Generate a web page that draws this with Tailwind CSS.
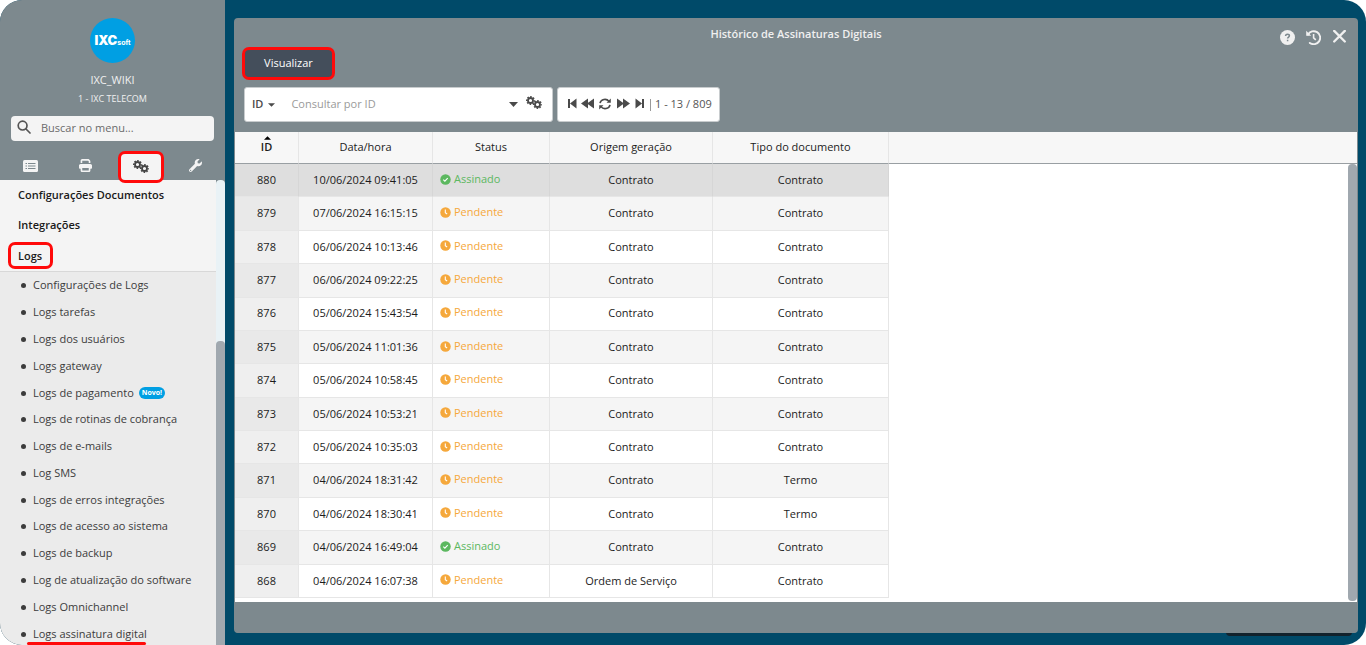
<!DOCTYPE html>
<html lang="pt-BR">
<head>
    <meta charset="UTF-8">
    <meta name="viewport" content="width=device-width, initial-scale=1.0">
    <title>Histórico de Assinaturas Digitais</title>
    <script src="https://cdn.jsdelivr.net/npm/@tailwindcss/browser@4"></script>
</head>
<body class="bg-white font-['Open_Sans',sans-serif] text-[11px]">
    <!-- shared icons -->
    <svg class="hidden">
        <symbol id="gear" viewBox="0 0 20 20">
            <circle cx="10" cy="10" r="5.6" fill="none" stroke="currentColor" stroke-width="4"/>
            <circle cx="10" cy="10" r="8.4" fill="none" stroke="currentColor" stroke-width="3.200" stroke-dasharray="3.6 3" stroke-dashoffset="1.8"/>
        </symbol>
        <symbol id="gears" viewBox="0 0 16 14">
            <use href="#gear" x="0" y="0" width="9" height="9"/>
            <use href="#gear" x="7" y="4" width="9" height="9"/>
        </symbol>
        <symbol id="clock" viewBox="0 0 12 12">
            <circle cx="6" cy="6" r="5.7" fill="currentColor"/>
            <path d="M5.8 2.8V6.2L7.8 7.6" fill="none" stroke="#fff" stroke-width="1.2"/>
        </symbol>
        <symbol id="check" viewBox="0 0 12 12">
            <circle cx="6" cy="6" r="5.7" fill="currentColor"/>
            <path d="M3.6 6.2L5.3 7.8L8.4 4.6" fill="none" stroke="#fff" stroke-width="1.2"/>
        </symbol>
    </svg>

    <div class="flex h-screen overflow-hidden rounded-[22px] bg-[#004a69]">
        <!-- sidebar -->
        <aside class="flex w-[225px] shrink-0 flex-col bg-[#7d898e]">
            <div class="flex flex-col items-center pt-[18px] text-[#f0f0f0]">
                <div class="flex size-[45px] items-center justify-center rounded-full bg-[#009fe3] text-white">
                    <div class="flex items-baseline font-['Inter',sans-serif] leading-none">
                        <span class="text-[13px] font-black">IXC</span><span class="text-[7px] font-bold">soft</span>
                    </div>
                </div>
                <p class="mt-2 text-[11px] leading-[18px] font-medium">IXC_WIKI</p>
                <p class="mt-[3px] text-[9px] leading-[14px]">1 - IXC TELECOM</p>
            </div>
            <label class="mx-[11px] mt-[10px] flex h-[25px] items-center rounded bg-[#f4f4f4] pl-[6px]">
                <svg class="mb-[3px] size-[14px] shrink-0 text-[#555]" viewBox="0 0 14 14" fill="none" stroke="currentColor" stroke-width="1.7" stroke-linecap="round"><circle cx="5.6" cy="5.6" r="4.4"/><path d="M9 9L13 13"/></svg>
                <input type="text" aria-label="Buscar no menu" placeholder="Buscar no menu..." class="ml-[10px] w-full bg-transparent text-[11px] outline-none placeholder:text-[#6b6b6b]">
            </label>
            <div class="mt-[10px] flex h-[29px] justify-between pl-[7px] text-[#f4f4f4]">
                <button aria-label="Lista" class="flex h-[29px] w-[46px] items-center justify-center">
                    <svg class="h-[12px] w-[15px]" viewBox="0 0 15 12"><rect width="15" height="12" rx="1.5" fill="currentColor"/><path d="M2.5 3.5H4M5 3.5H12.5M2.5 6H4M5 6H12.5M2.5 8.5H4M5 8.5H12.5" stroke="#7d898e" stroke-width="1.1"/></svg>
                </button>
                <button aria-label="Imprimir" class="flex h-[29px] w-[46px] items-center justify-center">
                    <svg class="size-[13px]" viewBox="0 0 512 512" fill="currentColor"><path d="M128 0C92.7 0 64 28.7 64 64v96h64V64H354.7L384 93.3V160h64V93.3c0-17-6.7-33.3-18.7-45.3L400 18.7C388 6.7 371.7 0 354.7 0H128zM384 352v32 64H128V384 368 352H384zm64 32h32c17.7 0 32-14.3 32-32V256c0-35.3-28.7-64-64-64H64c-35.3 0-64 28.7-64 64v96c0 17.7 14.3 32 32 32H64v64c0 35.3 28.7 64 64 64H384c35.3 0 64-28.7 64-64V384z"/></svg>
                </button>
                <button aria-label="Configurações" class="z-10 flex h-8 w-[46px] items-center justify-center rounded-[7px] border-3 border-[#ff0a0a] bg-[#f4f4f4] text-[#444]">
                    <svg class="h-[14px] w-4"><use href="#gears"/></svg>
                </button>
                <button aria-label="Ferramentas" class="mr-[6px] flex h-[29px] w-[46px] items-center justify-center">
                    <svg class="size-[13px]" viewBox="0 0 512 512" fill="currentColor"><path fill-rule="evenodd" d="M507.73 109.1c-2.24-9.03-13.54-12.09-20.12-5.51l-74.36 74.36-67.88-11.31-11.31-67.88 74.36-74.36c6.62-6.62 3.43-17.9-5.66-20.16-47.38-11.74-99.55.91-136.58 37.93-39.64 39.64-50.55 97.1-34.05 147.2L18.74 402.76c-24.99 24.99-24.99 65.51 0 90.5 24.99 24.99 65.51 24.99 90.5 0l213.21-213.21c50.12 16.71 107.47 5.68 147.37-34.22 37.07-37.07 49.7-89.32 37.91-136.73zM64 472c-13.25 0-24-10.75-24-24 0-13.26 10.75-24 24-24s24 10.74 24 24c0 13.25-10.75 24-24 24z"/></svg>
                </button>
            </div>
            <div class="flex min-h-0 flex-1">
                <nav class="flex min-w-0 flex-1 flex-col bg-[#ebebeb] text-[#3c3c3c]">
                    <div class="flex flex-col items-start border-b border-[#d8d8d8] bg-[#f4f4f4] pl-2 font-semibold text-[#1a1a1a]">
                        <a href="#" class="px-[10px] leading-[30px]">Configurações Documentos</a>
                        <a href="#" class="px-[10px] leading-[30px]">Integrações</a>
                        <a href="#" class="mt-[2px] mb-[2px] rounded-[7px] border-3 border-[#ff0a0a] px-[7px] pr-2 leading-[21px]">Logs</a>
                    </div>
                    <ul class="-mb-[2px] flex flex-1 flex-col" id="menu"></ul>
                </nav>
                <div class="flex w-[9px] flex-col rounded-t bg-[#e9f2f6] pt-[161px]">
                    <div class="flex-1 rounded-t bg-[#a0a8af]"></div>
                </div>
            </div>
        </aside>

        <!-- window -->
        <main class="relative mt-[18px] mr-2 mb-3 ml-[9px] flex min-w-0 flex-1 flex-col rounded bg-[#7d898e] px-px">
            <div class="absolute right-[6px] -bottom-[3px] h-[6px] w-[126px] rounded-b bg-[#12222c]"></div>
            <header class="relative flex h-[29px] shrink-0 items-center justify-center text-[#f0f0f0]">
                <h1 class="pt-[3px] leading-4 font-semibold">Histórico de Assinaturas Digitais</h1>
                <div class="absolute top-3 right-[10px] flex gap-[11px]">
                    <button aria-label="Ajuda">
                        <svg class="size-[15px]" viewBox="0 0 15 15"><circle cx="7.5" cy="7.5" r="7.5" fill="currentColor"/><path d="M5.6 6C5.6 4.6 6.4 4.2 7.5 4.2S9.4 4.8 9.4 5.8C9.4 7.1 7.6 7 7.6 8.6M7.6 9.7V11.2" fill="none" stroke="#7d898e" stroke-width="1.5"/></svg>
                    </button>
                    <button aria-label="Histórico">
                        <svg class="size-[15px]" viewBox="0 0 15 15" fill="none" stroke="currentColor"><path d="M2 4.6A6.5 6.5 0 1 1 3.8 12.9" stroke-width="1.9" stroke-linecap="round"/><path d="M0.2 0.8V5.8H5.2Z" fill="currentColor" stroke="none"/><path d="M7.6 3.9V7.8L9.8 9.8" stroke-width="1.6"/></svg>
                    </button>
                    <button aria-label="Fechar">
                        <svg class="size-[15px]" viewBox="0 0 15 15" fill="none" stroke="currentColor" stroke-width="2.3" stroke-linecap="round"><path d="M2.2 0.900L12.8 11.500M12.8 0.900L2.2 11.500"/></svg>
                    </button>
                </div>
            </header>
            <div class="flex px-[7px]">
                <button class="h-[33px] w-[93px] rounded-[7px] border-3 border-[#ff0a0a] bg-[#444e5b] text-white">Visualizar</button>
            </div>
            <div class="mt-[7px] mb-[10px] flex h-[35px] shrink-0 gap-1 px-[9px]">
                <div class="flex w-[309px] items-center rounded-[3px] border border-[#c8ccce] bg-white pr-[10px] pl-[7px] text-[#4a4a4a]">
                    <button class="flex items-center gap-[5px] font-semibold">ID
                        <svg class="h-1 w-[7px]" viewBox="0 0 8 4"><path d="M0 0H8L4 4Z" fill="currentColor"/></svg>
                    </button>
                    <input type="text" aria-label="Consultar por ID" placeholder="Consultar por ID" class="ml-4 min-w-0 flex-1 text-[11px] outline-none placeholder:text-[#9a9a9a]">
                    <button aria-label="Abrir opções"><svg class="h-[5px] w-[9px]" viewBox="0 0 8 4" preserveAspectRatio="none"><path d="M0 0H8L4 4Z" fill="currentColor"/></svg></button>
                    <button aria-label="Filtros" class="ml-2 pb-[3px]"><svg class="h-[14px] w-4"><use href="#gears"/></svg></button>
                </div>
                <div class="flex items-center rounded-[3px] border border-[#c8ccce] bg-white pr-[7px] pl-[10px] text-[#4a4a4a]">
                    <button aria-label="Primeira" class="pb-[2px]"><svg class="h-[11px] w-[9px]" viewBox="0 0 9 11" fill="currentColor"><path d="M0 1H2V10H0ZM8.5 0.500V10.500L2 5.500Z"/></svg></button>
                    <button aria-label="Anterior" class="ml-1 pb-[2px]"><svg class="h-[11px] w-[13px]" viewBox="0 0 13 11" fill="currentColor"><path d="M7 0.500V10.500L0 5.500ZM13 0.500V10.500L6 5.500Z"/></svg></button>
                    <button aria-label="Atualizar" class="ml-[5px] pb-[2px]"><svg class="size-[12px]" viewBox="0 0 12 12" fill="none" stroke="currentColor" stroke-width="1.6"><path d="M1 5.2A5 4.8 0 0 1 10 3.4M11 6.8A5 4.8 0 0 1 2 8.6"/><path d="M11.8 0.5V4.8H7.5ZM0.2 11.5V7.2H4.5Z" fill="currentColor" stroke="none"/></svg></button>
                    <button aria-label="Próxima" class="ml-[6px] pb-[2px]"><svg class="h-[11px] w-[13px]" viewBox="0 0 13 11" fill="currentColor"><path d="M0 0.500V10.500L7 5.500ZM6 0.500V10.500L13 5.500Z"/></svg></button>
                    <button aria-label="Última" class="ml-[5px] pb-[2px]"><svg class="h-[11px] w-[9px]" viewBox="0 0 9 11" fill="currentColor"><path d="M7 1H9V10H7ZM0.5 0.500V10.500L7 5.500Z"/></svg></button>
                    <span class="ml-[6px] h-3 w-px bg-[#999]"></span>
                    <span class="ml-1 whitespace-nowrap text-[#555]">1 - 13 / 809</span>
                </div>
            </div>

            <div class="relative min-h-0 flex-1 bg-white pb-1">
                <table class="h-full w-full table-fixed border-separate border-spacing-0 text-center text-[#1c1c1c]">
                    <colgroup>
                        <col class="w-[64px]"><col class="w-[134px]"><col class="w-[117px]"><col class="w-[163px]"><col class="w-[176px]"><col>
                    </colgroup>
                    <thead>
                        <tr class="h-8 bg-[#f7f7f7] *:border-b *:border-b-[#999fa3] *:font-normal">
                            <th class="relative border-r border-r-[#e6e6e6]"><svg class="absolute top-1 left-[29px] h-1 w-[7px]" viewBox="0 0 8 4"><path d="M0 4H8L4 0Z"/></svg><span class="font-semibold">ID</span></th>
                            <th class="border-r border-r-[#e6e6e6]">Data/hora</th>
                            <th class="border-r border-r-[#e6e6e6]">Status</th>
                            <th class="border-r border-r-[#e6e6e6]">Origem geração</th>
                            <th class="border-r border-r-[#e6e6e6]">Tipo do documento</th>
                            <th></th>
                        </tr>
                    </thead>
                    <tbody id="rows"></tbody>
                </table>
                <div class="absolute top-8 right-0 bottom-px w-[9px] rounded bg-[#a0a8af]"></div>
            </div>
            <footer class="relative h-[31px] shrink-0 rounded-b bg-[#7d898e]"></footer>
        </main>
    </div>

    <script>
        const menu = ["Configurações de Logs", "Logs tarefas", "Logs dos usuários", "Logs gateway", "Logs de pagamento",
            "Logs de rotinas de cobrança", "Logs de e-mails", "Log SMS", "Logs de erros integrações", "Logs de acesso ao sistema",
            "Logs de backup", "Log de atualização do software", "Logs Omnichannel", "Logs assinatura digital"];

        menu.forEach(name => {
            const li = document.createElement("li");
            li.className = "relative flex flex-1 items-center pl-[21px]";
            li.innerHTML = `<span class="mt-px mr-[7px] size-[5px] rounded-full bg-[#3c3c3c]"></span><a href="#" class="leading-4">${name}</a>`;
            if (name === "Logs de pagamento") {
                li.innerHTML += `<span class="ml-[5px] rounded-full bg-[#009fe3] px-[3px] text-[7px] leading-3 font-bold text-white">Novo!</span>`;
            }
            if (name === "Logs assinatura digital") {
                li.innerHTML += `<span class="absolute bottom-[2px] left-[27px] h-[3px] w-[119px] rounded-full bg-[#ff0a0a]"></span>`;
            }
            document.getElementById("menu").appendChild(li);
        });

        const rows = [
            [880, "10/06/2024 09:41:05", "Assinado", "Contrato", "Contrato"],
            [879, "07/06/2024 16:15:15", "Pendente", "Contrato", "Contrato"],
            [878, "06/06/2024 10:13:46", "Pendente", "Contrato", "Contrato"],
            [877, "06/06/2024 09:22:25", "Pendente", "Contrato", "Contrato"],
            [876, "05/06/2024 15:43:54", "Pendente", "Contrato", "Contrato"],
            [875, "05/06/2024 11:01:36", "Pendente", "Contrato", "Contrato"],
            [874, "05/06/2024 10:58:45", "Pendente", "Contrato", "Contrato"],
            [873, "05/06/2024 10:53:21", "Pendente", "Contrato", "Contrato"],
            [872, "05/06/2024 10:35:03", "Pendente", "Contrato", "Contrato"],
            [871, "04/06/2024 18:31:42", "Pendente", "Contrato", "Termo"],
            [870, "04/06/2024 18:30:41", "Pendente", "Contrato", "Termo"],
            [869, "04/06/2024 16:49:04", "Assinado", "Contrato", "Contrato"],
            [868, "04/06/2024 16:07:38", "Pendente", "Ordem de Serviço", "Contrato"]
        ];

        rows.forEach((r, i) => {
            const bg = i === 0 ? "bg-[#dedede]" : i % 2 ? "bg-[#f5f5f5]" : "bg-white";
            const idbg = i === 0 ? "bg-[#dedede]" : i % 2 ? "bg-[#e9e9e9]" : "bg-[#efefef]";
            const line = i === 0 ? "border-r border-b border-r-[#d6d6d6] border-b-[#e6e6e6]" : "border-r border-b border-[#e6e6e6]";
            const signed = r[2] === "Assinado";
            const tr = document.createElement("tr");
            tr.innerHTML = `
                <td class="${idbg} ${line}">${r[0]}</td>
                <td class="${bg} ${line}">${r[1]}</td>
                <td class="${bg} ${line}">
                    <div class="flex items-center gap-[3px] pb-[2px] pl-[7px] ${signed ? "text-[#5cb860]" : "text-[#f5a83c]"}">
                        <svg class="size-[11px]"><use href="${signed ? "#check" : "#clock"}"/></svg>${r[2]}
                    </div>
                </td>
                <td class="${bg} ${line}">${r[3]}</td>
                <td class="${bg} ${line}">${r[4]}</td>
                <td></td>`;
            document.getElementById("rows").appendChild(tr);
        });
    </script>
</body>
</html>
